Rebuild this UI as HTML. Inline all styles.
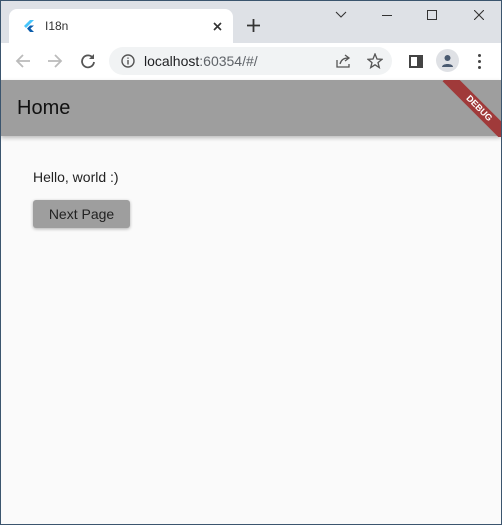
<!DOCTYPE html>
<html><head><meta charset="utf-8"><style>
*{margin:0;padding:0;box-sizing:border-box}
html,body{width:502px;height:525px;overflow:hidden;font-family:"Liberation Sans",sans-serif}
body{background:#3b556e;position:relative}
.win{position:absolute;left:1px;top:1px;width:500px;height:523px;background:#fafafa;overflow:hidden}
.top{position:absolute;left:0;top:0;width:500px;height:42px;background:#dee1e6}
.tab{position:absolute;left:8px;top:8px;width:224px;height:35px;background:#fff;border-radius:8px 8px 0 0}
.tb{position:absolute;left:0;top:42px;width:500px;height:37px;background:#fff}
.pill{position:absolute;left:108px;top:4px;width:283px;height:28px;background:#f1f3f4;border-radius:14px}
.appbar{position:absolute;left:0;top:79px;width:500px;height:56px;background:#9e9e9e;box-shadow:0 2px 4px rgba(0,0,0,.25)}
.clip{position:absolute;left:0;top:79px;width:500px;height:57px;overflow:hidden}
.t{position:absolute;white-space:nowrap}
.btn{position:absolute;left:32px;top:199px;width:97px;height:28px;background:#9e9e9e;border-radius:3px;box-shadow:0 1px 3px rgba(0,0,0,.3);font-size:14px;color:#222;text-align:center;line-height:28px}
.debug{position:absolute;left:433px;top:22px;width:90px;height:13px;background:#a03a3a;transform:rotate(45deg);color:#fff;font-size:9px;font-weight:bold;text-align:center;line-height:13px}
</style></head><body>
<div class="win">
<div class="top"></div>
<div class="tab">
<svg style="position:absolute;left:15px;top:11px" width="10" height="12" viewBox="0 0 10 12"><path d="M6 0L0 6l2 2 8-8z" fill="#47c5fb"/><path d="M6 5.5L3 8.5l3 3.5h4L6.5 8.5 10 5.5z" fill="#0b5cab"/></svg>
<div class="t" style="left:36px;top:10px;font-size:12px;color:#333">I18n</div>
<svg style="position:absolute;left:204px;top:13px" width="9" height="9"><path d="M1 1l7 7M8 1L1 8" stroke="#333" stroke-width="1.6"/></svg>
</div>
<svg style="position:absolute;left:246px;top:18px" width="13" height="13"><path d="M6.5 0v13M0 6.5h13" stroke="#333" stroke-width="1.8"/></svg>
<svg style="position:absolute;left:334px;top:10px" width="12" height="8"><path d="M1 1l5 5 5-5" stroke="#333" fill="none" stroke-width="1.1"/></svg>
<div style="position:absolute;left:381px;top:14px;width:10px;height:1px;background:#333"></div>
<div style="position:absolute;left:426px;top:9px;width:10px;height:10px;border:1px solid #333"></div>
<svg style="position:absolute;left:473px;top:9px" width="10" height="10"><path d="M0 0l10 10M10 0L0 10" stroke="#333" stroke-width="1.1"/></svg>
<div class="tb">
<svg style="position:absolute;left:14px;top:10px" width="16" height="16"><path d="M15 8H2M8 2L2 8l6 6" stroke="#bbb" fill="none" stroke-width="1.8"/></svg>
<svg style="position:absolute;left:46px;top:10px" width="16" height="16"><path d="M1 8h13M8 2l6 6-6 6" stroke="#bbb" fill="none" stroke-width="1.8"/></svg>
<svg style="position:absolute;left:79px;top:10px" width="16" height="16"><path d="M13 5A6 6 0 1 0 14 9" stroke="#555" fill="none" stroke-width="1.8"/><path d="M14 1v5H9z" fill="#555"/></svg>
<div class="pill">
<svg style="position:absolute;left:12px;top:7px" width="14" height="14"><circle cx="7" cy="7" r="6" stroke="#555" fill="none" stroke-width="1.4"/><path d="M7 6v4.5M7 3.5v1.3" stroke="#555" stroke-width="1.4"/></svg>
<div class="t" style="left:35px;top:6px;font-size:14px;color:#202124">localhost<span style="color:#5f6368">:60354/#/</span></div>
<svg style="position:absolute;left:227px;top:7px" width="15" height="14"><path d="M1 6v7h12v-3M4 10c1-4 4-6 8-6M9 1l4 3-4 3" stroke="#555" fill="none" stroke-width="1.3"/></svg>
<svg style="position:absolute;left:258px;top:6px" width="16" height="16"><path d="M8 1l2 5 5 .3-4 3.3 1.3 5L8 11.8 3.7 14.6 5 9.6 1 6.3 6 6z" stroke="#555" fill="none" stroke-width="1.3"/></svg>
</div>
<div style="position:absolute;left:408px;top:12px;width:14px;height:13px;border:2px solid #444;border-right-width:6px"></div>
<div style="position:absolute;left:435px;top:6px;width:23px;height:23px;border-radius:50%;background:#dfe1e5"></div>
<svg style="position:absolute;left:439px;top:10px" width="15" height="15"><circle cx="7.5" cy="5" r="3" fill="#4a5a70"/><path d="M2 14c0-4 11-4 11 0z" fill="#4a5a70"/></svg>
<div style="position:absolute;left:477px;top:11px;width:3px;height:3px;background:#444;border-radius:50%;box-shadow:0 6px 0 #444,0 12px 0 #444"></div>
</div>
<div class="appbar"><div class="t" style="left:16px;top:17px;font-size:20px;color:#111">Home</div></div>
<div class="clip"><div class="debug">DEBUG</div></div>
<div class="t" style="left:32px;top:168px;font-size:14px;color:#222">Hello, world :)</div>
<div class="btn">Next Page</div>
</div>
</body></html>
